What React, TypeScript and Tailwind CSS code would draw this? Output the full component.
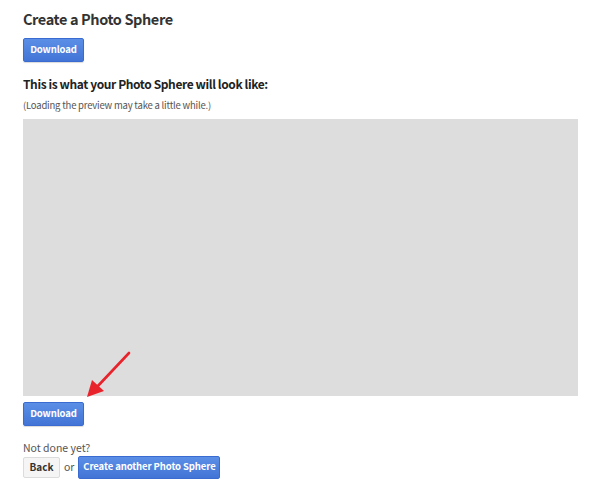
const font = { fontFamily: '"Noto Sans CJK KR", "Noto Sans", sans-serif' };

function BlueButton({ label }: { label: string }) {
  return (
    <button className="h-[24px] w-[61px] rounded-[2px] border border-[#3a6bd0] bg-gradient-to-b from-[#5b8fe6] to-[#4274d6] text-white text-[9.5px] font-bold leading-none tracking-[-0.1px] shadow-[0_1px_1px_rgba(0,0,0,0.15)]">
      {label}
    </button>
  );
}

export default function App() {
  return (
    <div className="relative w-[590px] h-[489px] bg-white text-[#333] pl-[23px] pt-[9px]" style={font}>
      <h1 className="text-[14.5px] font-bold leading-[20px] tracking-[-0.4px] text-[#333]">Create a Photo Sphere</h1>
      <div className="mt-[5px]">
        <BlueButton label="Download" />
      </div>
      <h2 className="mt-[13px] text-[12px] font-bold leading-[18px] tracking-[-0.4px] text-[#222]">
        This is what your Photo Sphere will look like:
      </h2>
      <p className="mt-[5px] text-[9.5px] leading-[14px] tracking-[-0.2px] text-[#555]">
        (Loading the preview may take a little while.)
      </p>
      <div className="mt-[7px] w-[555px] h-[277px] bg-[#dddddd]" />
      <div className="mt-[2px]">
        <BlueButton label="Download" />
      </div>
      <p className="mt-[15px] text-[10.5px] leading-[14px] text-[#555]">Not done yet?</p>
      <div className="mt-[1px] flex items-center gap-[4px]">
        <button className="h-[21px] w-[37px] rounded-[2px] border border-[#dcdcdc] bg-[#f5f5f5] text-[10px] font-bold text-[#333] leading-none">
          Back
        </button>
        <span className="text-[10.5px] text-[#555]">or</span>
        <button className="h-[23px] w-[142px] whitespace-nowrap rounded-[2px] border border-[#3a6bd0] bg-gradient-to-b from-[#5b8fe6] to-[#4274d6] text-white text-[9.5px] font-bold leading-none tracking-[-0.1px]">
          Create another Photo Sphere
        </button>
      </div>
      <svg className="absolute left-[84px] top-[350px]" width="50" height="50" viewBox="0 0 50 50">
        <line x1="45" y1="3" x2="12" y2="38" stroke="#e8232b" strokeWidth="2.6" strokeLinecap="round" />
        <polygon points="3,47 8,30 20,41" fill="#e8232b" />
      </svg>
    </div>
  );
}
